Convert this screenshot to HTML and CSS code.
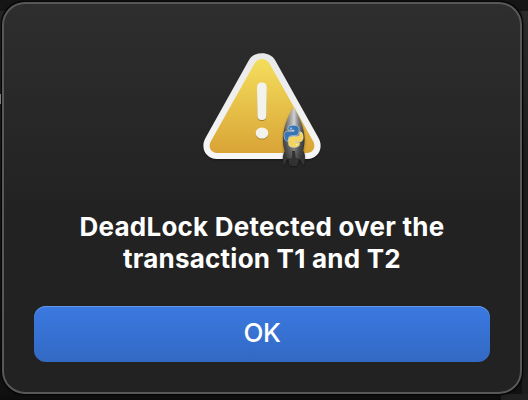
FILE: index.html
```html
<!DOCTYPE html>
<html lang="en">
<head>
<meta charset="utf-8">
<title>Alert</title>
<link rel="stylesheet" href="styles.css">
</head>
<body>
<div class="backdrop-detail"></div>
<div class="backdrop-side"></div>
<div class="backdrop-corner"></div>
<main class="dialog" role="alertdialog" aria-labelledby="message">
  <svg class="alert-icon" width="140" height="130" viewBox="190 40 140 130" aria-hidden="true">
    <defs>
      <linearGradient id="gold" x1="0" y1="0" x2="0" y2="1"><stop offset="0" stop-color="#f4de5c"/><stop offset="1" stop-color="#d9a436"/></linearGradient>
      <linearGradient id="rim" x1="0" y1="0" x2="0" y2="1"><stop offset="0" stop-color="#e9e9e9"/><stop offset="1" stop-color="#f7f7f7"/></linearGradient>
      <linearGradient id="metal" x1="0" y1="0" x2="1" y2="0"><stop offset="0" stop-color="#4b4b4b"/><stop offset=".3" stop-color="#969696"/><stop offset=".52" stop-color="#d0d0d0"/><stop offset=".72" stop-color="#808080"/><stop offset="1" stop-color="#404040"/></linearGradient>
      <linearGradient id="shade" x1="0" y1="0" x2="0" y2="1"><stop offset=".4" stop-color="#222" stop-opacity="0"/><stop offset="1" stop-color="#222" stop-opacity=".65"/></linearGradient>
      <filter id="drop" x="-20%" y="-20%" width="140%" height="140%"><feDropShadow dx="0" dy="1.2" stdDeviation="1" flood-color="#000" flood-opacity=".4"/></filter>
      <filter id="markdrop" x="-50%" y="-20%" width="200%" height="150%"><feDropShadow dx="0" dy="1" stdDeviation=".4" flood-color="#8c7020" flood-opacity=".8"/></filter>
    </defs>
    <path filter="url(#drop)" fill="url(#rim)" d="M249 60C254 51 270 51 275 60L318.500 138C324 148 318 159 306.500 159H217.500C206 159 200 148 205.500 138Z"/>
    <path fill="url(#gold)" d="M254.500 63.500C258 57.500 266 57.500 269.500 63.500L313 141C316.500 147.500 313 153 306 153H218C211 153 207.500 147.500 211 141Z"/>
    <g fill="#f3f3ee" filter="url(#markdrop)"><path d="M257 87.500Q257 82.500 261.900 82.500Q266.800 82.500 266.800 87.500L266.200 116Q266 120 261.900 120Q257.800 120 257.600 116Z"/><ellipse cx="262" cy="133" rx="6.300" ry="5.600"/></g>
    <g filter="url(#drop)">
      <path fill="#343434" d="M285 151C282 155 282.500 160 284 165.500Q285.500 160.500 288.500 158.500L290 166L292.500 161.500H295L297 166L299 158.500Q301.500 160.500 303 165.500C305.500 160 306 155 303 150Z"/>
      <path fill="url(#metal)" d="M293.500 107.500C286.500 118 283 130 283 139C283 147 285 152 287 157.500H300.500C303 152 304.500 147 304.500 139C304.500 129 300.500 118 293.500 107.500Z"/>
      <path fill="url(#shade)" d="M293.500 107.500C286.500 118 283 130 283 139C283 147 285 152 287 157.500H300.500C303 152 304.500 147 304.500 139C304.500 129 300.500 118 293.500 107.500Z"/>
      <path fill="#333" d="M292.200 151H295L296.500 166H291.500Z"/>
    </g>
    <path fill="#3975b5" stroke="#d6e0e7" stroke-width=".5" d="M288 130V128.300Q288 125.200 293.500 125.200Q299 125.200 299 128.500V132.500Q299 135.700 295 135.700H291.500Q288.300 135.700 288.300 139V141.300H286.800Q284 140 284 135.500Q284 131.300 287.500 131.300H294V130Z"/>
    <path fill="#f2d45f" stroke="#f3ebc6" stroke-width=".5" d="M299.700 131.800H300.500Q303.200 132.500 303.200 137Q303.200 141.700 299.500 141.700H294V142.500H299.500V144Q299.500 147.300 294 147.300Q288.600 147.300 288.600 144V140Q288.600 136.800 292.500 136.800H296Q299.700 136.800 299.700 134Z"/>
    <circle cx="291" cy="128.300" r=".7" fill="#fff"/><circle cx="296.500" cy="144.600" r=".7" fill="#fff"/>
  </svg>
  <h1 class="message" id="message">DeadLock Detected over the<br>transaction T1 and T2</h1>
  <button class="confirm" type="button">OK</button>
</main>
</body>
</html>
```
FILE: styles.css
```css
* { box-sizing: border-box; }

body {
  width: 528px;
  height: 400px;
  margin: 0;
  padding: 2px 0 0 2px;
  overflow: hidden;
  position: relative;
  background: linear-gradient(#151515 0 11px, #242424 11px, #1b1b1b 200px, #101010 394px, #0c0c0c);
  font-family: Inter, "Liberation Sans", sans-serif;
}

.backdrop-detail {
  position: absolute;
  left: 0;
  top: 94px;
  width: 1px;
  height: 10px;
  background: #aaa;
}

.backdrop-side {
  position: absolute;
  left: 522px;
  top: 11px;
  width: 6px;
  height: 389px;
  background: linear-gradient(#2d2b29, #1c1c1c 150px);
}

.backdrop-corner {
  position: absolute;
  left: 501px;
  top: 394px;
  width: 27px;
  height: 6px;
  background: #202020;
}

.dialog {
  position: relative;
  display: flex;
  flex-direction: column;
  align-items: center;
  width: 520px;
  height: 392px;
  padding: 36px 30px 30px;
  border: 2px solid #585858;
  border-radius: 23px;
  background: linear-gradient(#2e2e2e, #222 210px, #222);
  box-shadow: 0 0 0 1px #050505, 0 0 2px 1px #000;
}

.alert-icon {
  flex: none;
  display: block;
  margin-right: 4px;
}

.message {
  margin: 41px 0 0;
  color: #fff;
  font-size: 26px;
  font-weight: 700;
  line-height: 32px;
  letter-spacing: 0.23px;
  text-align: center;
  white-space: nowrap;
}

.confirm {
  width: 456px;
  height: 56px;
  margin: 31px 0 0;
  padding: 0 0 2px;
  border: 0;
  border-radius: 12px;
  background: linear-gradient(#3b79e1, #3269c3);
  box-shadow: inset 0 1px #6397e8;
  color: #fff;
  font: 500 26px/52px Inter, "Liberation Sans", sans-serif;
  letter-spacing: -0.5px;
}
```
